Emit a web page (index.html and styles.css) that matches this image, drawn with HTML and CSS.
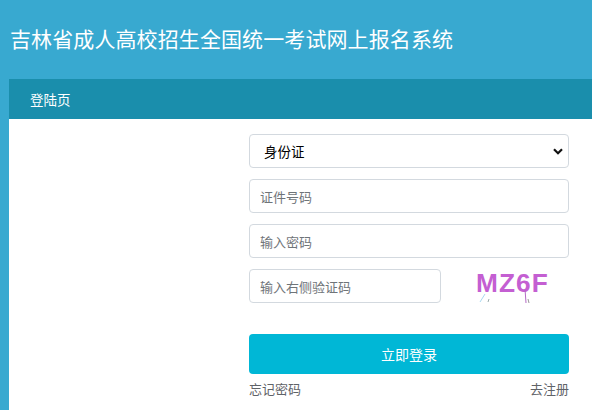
FILE: index.html
```html
<!DOCTYPE html>
<html lang="zh">
<head>
<meta charset="utf-8">
<link rel="stylesheet" href="styles.css">
</head>
<body>
<header class="top">
  <h1 class="title">吉林省成人高校招生全国统一考试网上报名系统</h1>
</header>
<section class="panel">
  <div class="bar">登陆页</div>
  <div class="content">
    <form class="form">
      <div class="select-wrap">
        <select class="field select">
          <option>身份证</option>
        </select>
        <svg class="chev" width="10" height="7" viewBox="0 0 10 7"><path d="M1 1.2 L5 5.2 L9 1.2" fill="none" stroke="#111" stroke-width="2.2"/></svg>
      </div>
      <input class="field" type="text" placeholder="证件号码">
      <input class="field" type="password" placeholder="输入密码">
      <div class="captcha-row">
        <input class="field code" type="text" placeholder="输入右侧验证码">
        <div class="captcha">
          <span class="captcha-text">MZ6F</span>
          <svg class="noise" width="80" height="34" viewBox="0 0 80 34"><path d="M4 33 L9 25" stroke="#a8d8f0" stroke-width="1"/><path d="M12 33 L13 30" stroke="#9aa" stroke-width="1"/><path d="M49 20 L50 34" stroke="#b46ac4" stroke-width="1"/><path d="M52 30 L53 34" stroke="#999" stroke-width="1"/></svg>
        </div>
      </div>
      <button class="btn" type="button">立即登录</button>
      <div class="links">
        <a class="link">忘记密码</a>
        <a class="link">去注册</a>
      </div>
    </form>
  </div>
</section>
</body>
</html>
```
FILE: styles.css
```css
html, body {
  margin: 0;
  padding: 0;
}
body {
  background: #38a9d0;
  font-family: "Noto Sans CJK SC", "Noto Sans", sans-serif;
  width: 592px;
  height: 410px;
  overflow: hidden;
}
.top {
  height: 79px;
  display: flex;
  align-items: center;
  padding-left: 10px;
}
.title {
  margin: 0;
  margin-top: -3px;
  color: #fff;
  font-size: 21px;
  font-weight: normal;
  line-height: 1;
  letter-spacing: 0.1px;
}
.panel {
  margin-left: 9px;
  background: #fff;
  height: 331px;
}
.bar {
  height: 40px;
  background: #1a8eac;
  color: #fff;
  font-size: 13.5px;
  line-height: 40px;
  padding-left: 21px;
}
.content {
  padding-top: 15px;
  padding-left: 240px;
}
.form {
  width: 320px;
  display: flex;
  flex-direction: column;
}
.field {
  box-sizing: border-box;
  height: 34px;
  width: 100%;
  border: 1px solid #d3d9df;
  border-radius: 4px;
  background: #fff;
  padding: 0 10px;
  font-family: "Noto Sans CJK SC", sans-serif;
  font-size: 13px;
  color: #222;
  margin: 0 0 11px 0;
  outline: none;
}
.field::placeholder {
  color: #6f7479;
}
.select-wrap {
  position: relative;
}
.select {
  appearance: none;
  -webkit-appearance: none;
  padding-left: 14px;
  color: #000;
  font-size: 13.5px;
}
.chev {
  position: absolute;
  right: 6px;
  top: 14px;
}
.captcha-row {
  display: flex;
  align-items: flex-start;
}
.code {
  width: 192px;
}
.captcha {
  position: relative;
  margin-left: 35px;
  width: 76px;
  height: 34px;
  overflow: hidden;
}
.captcha-text {
  display: block;
  font-family: "Liberation Sans", Arial, sans-serif;
  font-weight: bold;
  font-size: 25px;
  color: #c45fd2;
  letter-spacing: 1px;
  line-height: 1;
  padding-top: 2px;
  transform: scaleX(1.05);
  transform-origin: left;
}
.noise {
  position: absolute;
  left: 0;
  top: 0;
}
.btn {
  margin-top: 20px;
  height: 40px;
  border: none;
  border-radius: 4px;
  background: #00b7d6;
  color: #fff;
  font-family: "Noto Sans CJK SC", sans-serif;
  font-size: 14px;
  padding: 0;
}
.links {
  display: flex;
  justify-content: space-between;
  margin-top: 6px;
}
.link {
  font-size: 13px;
  color: #5f6368;
  line-height: 18px;
}
```
